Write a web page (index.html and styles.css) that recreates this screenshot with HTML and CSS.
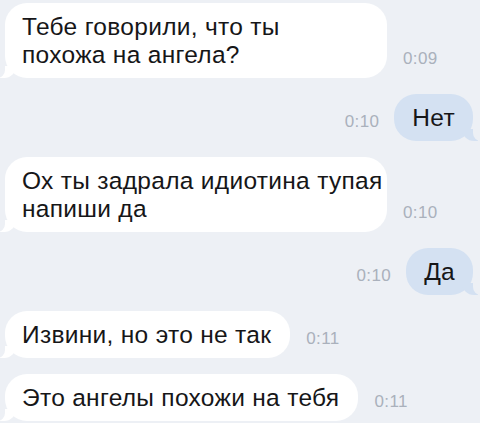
FILE: index.html
```html
<!DOCTYPE html>
<html lang="ru">
<head>
    <meta charset="UTF-8">
    <meta name="viewport" content="width=device-width, initial-scale=1.0">
    <title>Чат</title>
    <link rel="stylesheet" href="styles.css">
</head>
<body>

    <div class="chat">
        <!-- incoming -->
        <div class="row in">
            <div class="bubble wide">Тебе говорили, что ты<br>похожа на ангела?</div>
            <span class="time">0:09</span>
        </div>

        <div class="row out">
            <span class="time">0:10</span>
            <div class="bubble">Нет</div>
        </div>

        <div class="row in">
            <div class="bubble wide">Ох ты задрала идиотина тупая<br>напиши да</div>
            <span class="time">0:10</span>
        </div>

        <div class="row out">
            <span class="time">0:10</span>
            <div class="bubble">Да</div>
        </div>

        <div class="row in">
            <div class="bubble">Извини, но это не так</div>
            <span class="time">0:11</span>
        </div>

        <div class="row in">
            <div class="bubble">Это ангелы похожи на тебя</div>
            <span class="time">0:11</span>
        </div>
    </div>

</body>
</html>
```

FILE: styles.css
```css
body {
    margin: 0;
    padding: 0;
    background: #edf0f5;
    font-family: 'Liberation Sans', Arial, sans-serif;
    color: #161618;
    overflow: hidden;
}

.chat {
    display: flex;
    flex-direction: column;
    gap: 16px;
    padding-top: 3px;
}

.row {
    display: flex;
    align-items: flex-end;
    gap: 16px;
}

.row.in {
    padding-left: 5px;
}

.row.out {
    justify-content: flex-end;
    gap: 15px;
    padding-right: 7px;
}

.bubble {
    position: relative;
    font-size: 24.5px;
    letter-spacing: 0.3px;
    line-height: 28px;
    padding: 10px 19px 9px 17px;
    border-radius: 22px;
    background: #fff;
    white-space: nowrap;
}

.bubble.wide {
    width: 346px;
}

.out .bubble {
    background: #d4e1f2;
    padding: 10px 18px 9px 18px;
}

/* little tails */
.in .bubble::before {
    content: "";
    position: absolute;
    bottom: 0;
    left: -5px;
    width: 16px;
    height: 12px;
    background: #fff;
    border-bottom-right-radius: 12px;
}

.in .bubble::after {
    content: "";
    position: absolute;
    bottom: 0;
    left: -10px;
    width: 10px;
    height: 14px;
    background: #edf0f5;
    border-bottom-right-radius: 8px;
}

.out .bubble::before {
    content: "";
    position: absolute;
    bottom: 0;
    right: -5px;
    width: 16px;
    height: 12px;
    background: #d4e1f2;
    border-bottom-left-radius: 12px;
}

.out .bubble::after {
    content: "";
    position: absolute;
    bottom: 0;
    right: -10px;
    width: 10px;
    height: 14px;
    background: #edf0f5;
    border-bottom-left-radius: 8px;
}

.time {
    font-size: 17px;
    letter-spacing: 0.4px;
    line-height: 18px;
    color: #aab1bc;
    margin-bottom: 10px;
}
```
